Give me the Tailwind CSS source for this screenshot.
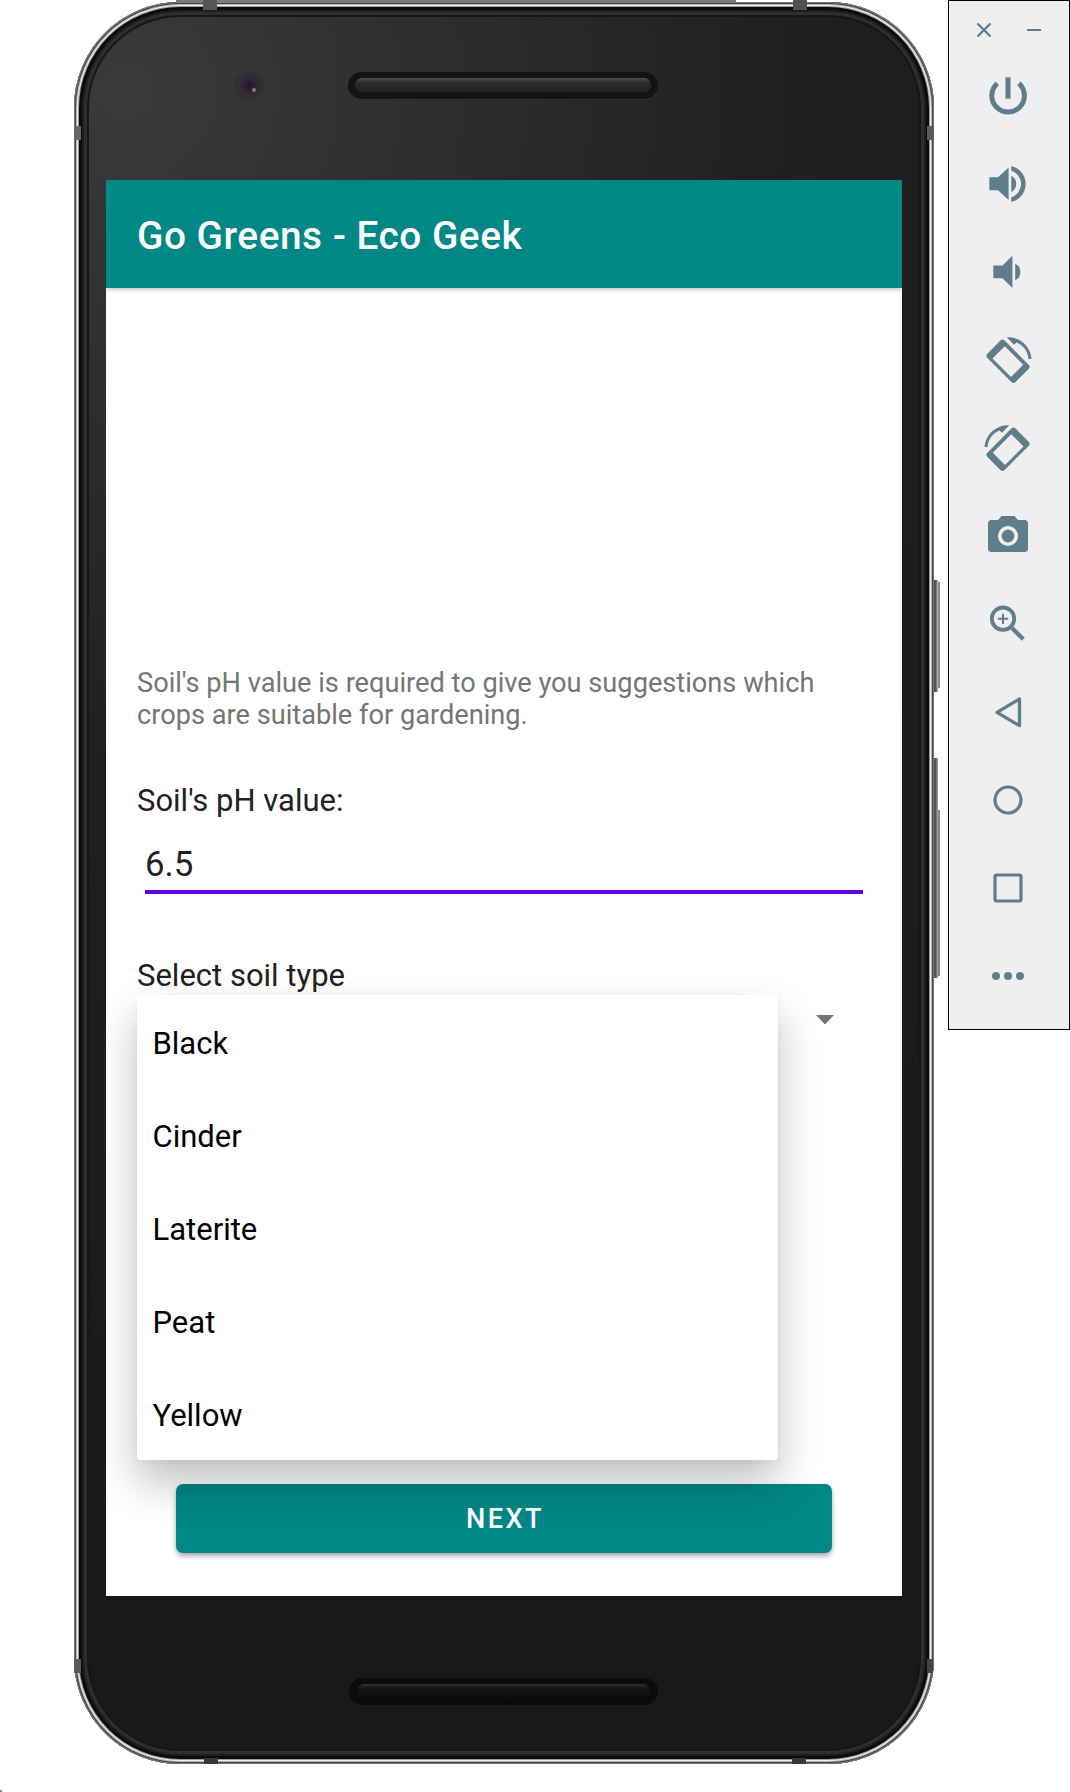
<!DOCTYPE html>
<html lang="en">
<head>
<meta charset="utf-8">
<title>Go Greens - Eco Geek</title>
<script src="https://cdn.jsdelivr.net/npm/@tailwindcss/browser@4"></script>
</head>
<body class="bg-white">
<div class="relative flex h-[1792px] w-[1070px] items-start overflow-hidden bg-white font-['Roboto',sans-serif]">

  <!-- Phone -->
  <div class="relative ml-[74px] h-[1764px] w-[860px] shrink-0 pt-[2px]">
    <div class="absolute top-0 left-[102px] h-[2px] w-[560px] bg-[#7b7b79]"></div>
    <!-- side keys -->
    <div class="absolute top-[580px] left-[859px] h-[112px] w-[5px] bg-linear-to-r from-[#444] via-[#555] to-[#b0b0b0]"></div>
    <div class="absolute top-[582px] left-[863px] h-[106px] w-[3px] border-r-2 border-[#8a8a8a] bg-[#b0b0b0]"></div>
    <div class="absolute top-[810px] left-[862px] h-[166px] w-[4px] bg-[#8a8a8a]"></div>
    <div class="absolute top-[758px] left-[859px] h-[220px] w-[5px] bg-linear-to-r from-[#444] via-[#555] to-[#b0b0b0]"></div>

    <div class="relative flex h-[1762px] flex-col rounded-[106px] bg-[radial-gradient(circle_at_6%_5%,#3a3a3a_0,#2d2d2d_320px,#1f1f1f_680px,#191919_1500px)] px-8 shadow-[inset_0_0_0_1px_#777,inset_0_0_0_2px_#444,inset_0_0_0_3px_#b5b5b5,inset_0_0_0_4px_#efefef,inset_0_0_0_5px_#9a9a9a,inset_0_0_0_8px_#0c0c0c,inset_0_0_0_10px_#1e1e1e,inset_0_0_0_13px_#2e2e2e,inset_0_0_0_15px_#161616]">
      <!-- antenna bands -->
      <div class="absolute top-[-2px] left-[129px] h-[10px] w-[14px] bg-[#555]"></div>
      <div class="absolute top-[-2px] left-[719px] h-[10px] w-[14px] bg-[#505050]"></div>
      <div class="absolute top-[124px] left-0 h-[14px] w-[7px] bg-[#666]"></div>
      <div class="absolute top-[124px] right-0 h-[14px] w-[7px] bg-[#5a5a5a]"></div>
      <div class="absolute top-[1657px] left-0 h-[14px] w-[7px] bg-[#5a5a5a]"></div>
      <div class="absolute top-[1657px] right-[1px] h-[14px] w-[6px] bg-[#444]"></div>
      <div class="absolute bottom-0 left-[130px] h-[6px] w-[14px] bg-[#383838]"></div>
      <div class="absolute bottom-0 left-[718px] h-[6px] w-[14px] bg-[#383838]"></div>

      <!-- top bezel -->
      <div class="flex h-[178px] shrink-0 items-start pl-[129px]">
        <div class="mt-[69px] flex size-[29px] items-center justify-center rounded-full bg-[#303030] shadow-[0_0_1px_1px_#363636]">
          <div class="relative size-[19px] rounded-full bg-[radial-gradient(circle,#1d1826_0,#30273a_55%,#2c2733_100%)]">
            <div class="absolute right-[3px] bottom-[3px] size-[4px] rounded-full bg-[#a87070]"></div>
          </div>
        </div>
        <div class="mt-[70px] ml-[84px] h-[27px] w-[310px] rounded-full bg-[#131313] px-[7px] py-[6px] shadow-[0_1px_0_0_#353535]">
          <div class="h-[14px] rounded-full bg-linear-to-b from-[#505050] via-[#2a2a2a] via-35% to-[#222]"></div>
        </div>
      </div>

      <!-- Screen -->
      <div class="relative h-[1416px] w-[796px] shrink-0 overflow-hidden bg-white">
        <header class="relative flex h-[108px] items-center bg-[#008786] px-[31px] shadow-[0_1px_5px_rgba(0,0,0,0.3)]">
          <h1 class="pt-[4px] text-[38.8px] leading-[46px] font-medium tracking-[0.5px] text-white">Go Greens - Eco Geek</h1>
        </header>

        <main class="px-[31px] pt-[380px]">
          <p class="text-[27.2px] leading-[31.5px] whitespace-nowrap text-[#757575]">Soil's pH value is required to give you suggestions which<br>crops are suitable for gardening.</p>
          <div class="mt-[52px] text-[31px] leading-[36px] text-[#212121]">Soil's pH value:</div>
          <div class="mt-[25px] ml-2 h-[50px] w-[718px] border-b-[4px] border-[#6200ee] text-[34.8px] leading-[41px] text-[#212121]">6.5</div>
          <div class="mt-[64px] text-[31px] leading-[36px] text-[#212121]">Select soil type</div>
          <div class="mt-[21px] flex justify-end pr-[37px]">
            <svg class="h-[10px] w-[18px]" viewBox="0 0 18 10" fill="#757575"><path d="M0 0H18L9 9.5Z"/></svg>
          </div>
          <button class="mt-[459px] ml-[39px] block h-[69px] w-[656px] rounded-[7px] bg-[#008786] pt-[2px] pl-[2px] text-center text-[27.2px] font-medium tracking-[2.43px] text-white shadow-[0_3px_5px_rgba(0,0,0,0.35)]">NEXT</button>
        </main>

        <!-- Dropdown list -->
        <ul class="absolute top-[815px] left-[31px] h-[465px] w-[641px] rounded-[4px] bg-white text-[31px] text-black shadow-[0_22px_44px_rgba(0,0,0,0.25),0_2px_6px_rgba(0,0,0,0.04)]">
          <li class="flex h-[93px] items-center pt-[6px] pl-[15.5px]">Black</li>
          <li class="flex h-[93px] items-center pt-[6px] pl-[15.5px]">Cinder</li>
          <li class="flex h-[93px] items-center pt-[6px] pl-[15.5px]">Laterite</li>
          <li class="flex h-[93px] items-center pt-[6px] pl-[15.5px]">Peat</li>
          <li class="flex h-[93px] items-center pt-[6px] pl-[15.5px]">Yellow</li>
        </ul>
      </div>

      <!-- bottom speaker -->
      <div class="mt-[82px] ml-[243px] h-[27px] w-[309px] shrink-0 rounded-full bg-[#0b0b0b] px-[8px] pt-[6px]">
        <div class="h-[15px] rounded-full bg-linear-to-b from-[#333] via-[#141414] via-30% to-[#0c0c0c]"></div>
      </div>
    </div>
  </div>

  <!-- Emulator toolbar -->
  <aside class="ml-[14px] flex h-[1030px] w-[122px] shrink-0 flex-col border border-black bg-[#efefef] text-[#607d8b]">
    <div class="flex h-[51px] shrink-0 items-center pt-[7px] pl-[27px]">
      <svg class="size-[16px]" viewBox="0 0 16 16" fill="none" stroke="currentColor" stroke-width="2.3"><path d="M1.5 1.5L14.5 14.5M14.5 1.5L1.5 14.5"/></svg>
      <div class="ml-[35px] h-[2px] w-[14px] bg-[#607d8b]"></div>
    </div>
    <div class="flex h-[88px] shrink-0 items-center justify-center pr-[2px]">
      <svg class="size-[50px]" viewBox="0 0 50 50" fill="none" stroke="currentColor" stroke-width="5"><path d="M25 6.3V27.7M35.9 12.4A16.3 16.3 0 1 1 14.3 12.4"/></svg>
    </div>
    <div class="flex h-[88px] shrink-0 items-center justify-center pr-[2px]">
      <svg class="size-[50px]" viewBox="0 0 50 50" fill="currentColor"><path d="M6.3 18.3H15L25.6 8.5V41L15 31.3H6.3ZM28.3 16.7A9.2 9.2 0 0 1 28.3 33ZM28.3 6.9A18.6 18.6 0 0 1 28.3 43.1V38.2A13.8 13.8 0 0 0 28.3 11.8Z"/></svg>
    </div>
    <div class="flex h-[88px] shrink-0 items-center justify-center pr-[2px]">
      <svg class="size-[50px]" viewBox="0 0 50 50" fill="currentColor"><path d="M10.3 18.6H19.5L29.4 8.8V40.9L19.5 31.2H10.3ZM32.2 16.7A9.2 9.2 0 0 1 32.2 33.3Z"/></svg>
    </div>
    <div class="flex h-[88px] shrink-0 items-center justify-center pr-[2px]">
      <svg class="size-[50px]" viewBox="0 0 50 50" fill="currentColor"><path stroke="currentColor" stroke-width="6" stroke-linejoin="round" d="M6.5 20.8L19.5 7.7L43.5 31.8L30.5 44.8Z"/><path fill="#efefef" d="M9.5 23.5L21.8 11.3L40.2 29.8L28 42Z"/><path d="M23.7 2.3A23.3 23.3 0 0 1 48.5 24H45.4C45 16.5 40.5 10.5 33.5 7.5L31 9.8Z"/></svg>
    </div>
    <div class="flex h-[88px] shrink-0 items-center justify-center pr-[2px]">
      <svg class="size-[50px] -scale-x-100" viewBox="0 0 50 50" fill="currentColor"><path stroke="currentColor" stroke-width="6" stroke-linejoin="round" d="M6.5 20.8L19.5 7.7L43.5 31.8L30.5 44.8Z"/><path fill="#efefef" d="M9.5 23.5L21.8 11.3L40.2 29.8L28 42Z"/><path d="M23.7 2.3A23.3 23.3 0 0 1 48.5 24H45.4C45 16.5 40.5 10.5 33.5 7.5L31 9.8Z"/></svg>
    </div>
    <div class="flex h-[88px] shrink-0 items-center justify-center pr-[2px]">
      <svg class="size-[50px]" viewBox="0 0 50 50" fill="currentColor"><path d="M18.6 5H31.4L35 9H41.5A3.5 3.5 0 0 1 45 12.5V37.5A3.5 3.5 0 0 1 41.5 41H8.5A3.5 3.5 0 0 1 5 37.5V12.5A3.5 3.5 0 0 1 8.500 9H15Z"/><circle cx="25" cy="25" r="8.2" fill="none" stroke="#efefef" stroke-width="3.6"/></svg>
    </div>
    <div class="flex h-[88px] shrink-0 items-center justify-center pr-[2px]">
      <svg class="size-[50px]" viewBox="0 0 50 50" fill="none" stroke="currentColor"><circle cx="20" cy="19.7" r="11.2" stroke-width="3.8"/><path stroke-width="2" d="M14.9 19.7H25.2M20 14.7V25"/><path stroke-width="4.2" d="M29 29L40.3 40.2"/></svg>
    </div>
    <div class="flex h-[88px] shrink-0 items-center justify-center pr-[2px]">
      <svg class="size-[50px]" viewBox="0 0 50 50" fill="none" stroke="currentColor" stroke-width="3.3" stroke-linejoin="round"><path d="M14 25.3L36.5 12V38.7Z"/></svg>
    </div>
    <div class="flex h-[88px] shrink-0 items-center justify-center pr-[2px]">
      <svg class="size-[50px]" viewBox="0 0 50 50" fill="none" stroke="currentColor" stroke-width="3.2"><circle cx="25" cy="25" r="13"/></svg>
    </div>
    <div class="flex h-[88px] shrink-0 items-center justify-center pr-[2px]">
      <svg class="size-[50px]" viewBox="0 0 50 50" fill="none" stroke="currentColor" stroke-width="3.2"><rect x="12" y="12" width="26" height="26" rx="1.5"/></svg>
    </div>
    <div class="flex h-[88px] shrink-0 items-center justify-center pr-[2px]">
      <svg class="size-[50px]" viewBox="0 0 50 50" fill="currentColor"><circle cx="13" cy="25" r="4"/><circle cx="25" cy="25" r="4"/><circle cx="37" cy="25" r="4"/></svg>
    </div>
  </aside>

  <div class="absolute bottom-0 left-0 h-[2px] w-[2px] bg-[#888]"></div>
</div>
</body>
</html>
